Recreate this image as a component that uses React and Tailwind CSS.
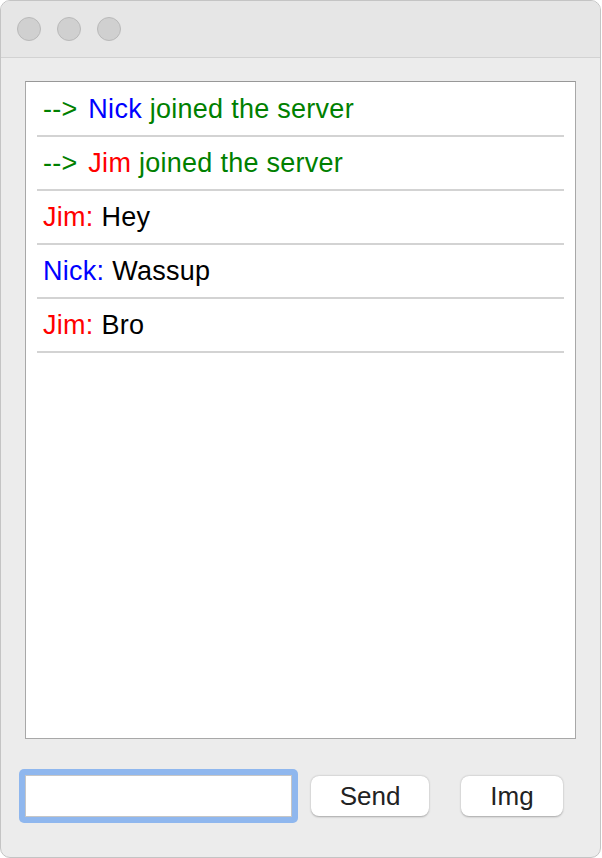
import React from "react";

const messages = [
  { kind: "join", name: "Nick", color: "text-[#0000ff]" },
  { kind: "join", name: "Jim", color: "text-[#ff0000]" },
  { kind: "msg", name: "Jim", color: "text-[#ff0000]", text: "Hey" },
  { kind: "msg", name: "Nick", color: "text-[#0000ff]", text: "Wassup" },
  { kind: "msg", name: "Jim", color: "text-[#ff0000]", text: "Bro" },
];

function Row({ m }) {
  if (m.kind === "join") {
    return (
      <li className="flex h-[54px] items-center border-b-2 border-[#d3d3d3] pl-[6px] text-[#008000]">
        <span className="mr-[3px]">--&gt;&nbsp;</span>
        <span className={m.color}>{m.name}</span>
        <span>&nbsp;joined the server</span>
      </li>
    );
  }
  return (
    <li className="flex h-[54px] items-center border-b-2 border-[#d3d3d3] pl-[6px] text-black">
      <span className={m.color}>{m.name}:</span>
      <span>&nbsp;{m.text}</span>
    </li>
  );
}

export default function App() {
  return (
    <div className="h-[858px] w-[602px] bg-white font-['Liberation_Sans',Arial,sans-serif]">
      <div className="flex h-full w-[601px] flex-col overflow-hidden rounded-[10px] border border-[#c4c4c4] bg-[#ececec]">
        {/* title bar */}
        <div className="flex h-[57px] shrink-0 items-center gap-[16px] border-b border-[#d2d2d2] bg-[#e6e6e6] pl-[16px]">
          <span className="h-[24px] w-[24px] rounded-full border border-[#b9b9b9] bg-[#d0d0d0]" />
          <span className="h-[24px] w-[24px] rounded-full border border-[#b9b9b9] bg-[#d0d0d0]" />
          <span className="h-[24px] w-[24px] rounded-full border border-[#b9b9b9] bg-[#d0d0d0]" />
        </div>

        {/* message list */}
        <div className="mx-[24px] mt-[23px] h-[658px] shrink-0 border border-[#a8a8a8] border-t-[#989898] bg-white px-[11px] pt-px">
          <ul className="text-[27px] tracking-[0.01em]">
            {messages.map((m, i) => (
              <Row key={i} m={m} />
            ))}
          </ul>
        </div>

        {/* input bar */}
        <div className="mt-[30px] flex items-center pl-[18px]">
          <div className="rounded-[5px] bg-[#8fb7ee] p-[6px]">
            <input
              className="block h-[42px] w-[267px] border border-[#c6c6c6] bg-white outline-none"
              type="text"
            />
          </div>
          <button className="ml-[13px] h-[40px] w-[118px] rounded-[8px] bg-white text-[26px] text-[#222] shadow-[0_0.5px_2px_rgba(0,0,0,0.3)]">
            Send
          </button>
          <button className="ml-[32px] h-[40px] w-[102px] rounded-[8px] bg-white text-[26px] text-[#222] shadow-[0_0.5px_2px_rgba(0,0,0,0.3)]">
            Img
          </button>
        </div>
      </div>
    </div>
  );
}
